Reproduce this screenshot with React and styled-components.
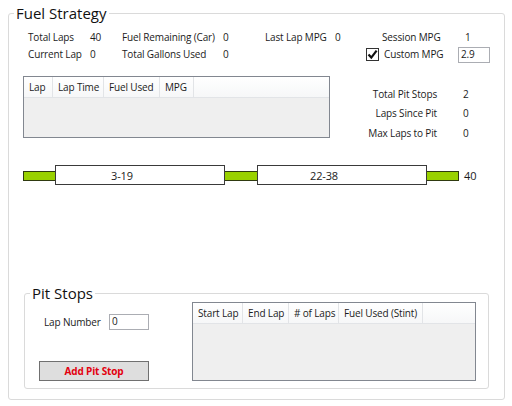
import React from "react";
import styled, { createGlobalStyle } from "styled-components";

const GlobalStyle = createGlobalStyle`
    html, body {
        margin: 0;
        padding: 0;
        background: #ffffff;
    }
    body {
        font-family: "Open Sans", "Noto Sans", sans-serif;
        font-size: 10px;
        letter-spacing: -0.15px;
        color: #1b1b1b;
    }
`;

const Group = styled.fieldset`
        box-sizing: border-box;
        width: ${p => p.$width}px;
        margin: ${p => p.$margin};
        padding: 0 0 ${p => p.$padBottom}px 0;
        border: 1px solid #dadada;
        border-radius: 3px;
        min-inline-size: 0;
    `,
    Legend = styled.legend`
        font-size: 15px;
        letter-spacing: 0;
        line-height: 18px;
        padding: 0 2px;
        margin-left: 5px;
        color: #111;
    `,
    StatsGrid = styled.div`
        display: grid;
        grid-template-columns: 62px 32px 101px 42px 70px 31px 16px 76px 40px;
        grid-auto-rows: 17px;
        align-items: center;
        margin: 7px 0 0 19px;
        line-height: 17px;
        white-space: nowrap;
    `,
    Cell = styled.div`
        grid-column: ${p => p.$col};
        grid-row: ${p => p.$row};
        padding-left: ${p => p.$pad || 0}px;
    `,
    Check = styled.div`
        box-sizing: border-box;
        width: 13px;
        height: 13px;
        border: 1px solid #333;
        background: #fff;
        display: flex;
        align-items: center;
        justify-content: center;
    `,
    TextBox = styled.div`
        box-sizing: border-box;
        width: ${p => p.$width}px;
        height: 16px;
        border: 1px solid #abadb3;
        background: #fff;
        padding: 0 2px;
        line-height: 13px;
    `,
    Middle = styled.div`
        display: flex;
        height: 66px;
        margin: 13px 0 0 14px;
    `,
    List = styled.div`
        box-sizing: border-box;
        width: ${p => p.$width}px;
        height: ${p => p.$height}px;
        border: 1px solid #828790;
        background: #efefef;
        display: flex;
        flex-direction: column;
    `,
    ListHeader = styled.div`
        display: flex;
        height: 20px;
        background: linear-gradient(#ffffff, #f6f7f8);
        border-bottom: 1px solid #e2e4e7;
    `,
    HeaderCell = styled.div`
        box-sizing: border-box;
        width: ${p => p.$width}px;
        padding-left: 5px;
        line-height: 20px;
        border-right: 1px solid #e2e4e7;
        white-space: nowrap;
        overflow: hidden;
    `,
    PitStats = styled.div`
        display: grid;
        grid-template-columns: 107px 40px;
        grid-auto-rows: 19.5px;
        align-items: center;
        margin-top: 8px;
        white-space: nowrap;
    `,
    StatLabel = styled.div`
        text-align: right;
    `,
    StatValue = styled.div`
        padding-left: 26px;
    `,
    BarRow = styled.div`
        display: flex;
        align-items: center;
        margin: 23px 0 0 14px;
        height: 20px;
    `,
    Track = styled.div`
        position: relative;
        width: ${p => p.$width}px;
        height: 20px;

        &::before {
            content: "";
            position: absolute;
            left: 0;
            right: 0;
            top: 6px;
            height: 10px;
            box-sizing: border-box;
            border: 1px solid #2f3a10;
            background: #99d100;
        }
    `,
    Stint = styled.div`
        position: absolute;
        top: 0;
        box-sizing: border-box;
        height: 20px;
        border: 1px solid #3a3a3a;
        background: #fff;
        padding-right: 36px;
        text-align: center;
        line-height: 20px;
        font-size: 11px;
    `,
    BarEnd = styled.div`
        margin-left: 5px;
        font-size: 11px;
    `,
    PitBody = styled.div`
        display: flex;
    `,
    PitForm = styled.div`
        width: 167px;
        display: flex;
        flex-direction: column;
    `,
    LapRow = styled.div`
        display: grid;
        grid-template-columns: 65px 40px;
        align-items: center;
        margin: 12px 0 0 19px;
        height: 16px;
        white-space: nowrap;
    `,
    AddButton = styled.div`
        box-sizing: border-box;
        width: 110px;
        height: 20px;
        margin: 31px 0 0 14px;
        background: #dedede;
        border: 1px solid #707070;
        color: #e3000f;
        font-weight: bold;
        text-align: center;
        line-height: 18px;
    `;

const lapColumns = [
    { title: "Lap", width: 29 },
    { title: "Lap Time", width: 51 },
    { title: "Fuel Used", width: 56 },
    { title: "MPG", width: 34 },
];

const pitColumns = [
    { title: "Start Lap", width: 50 },
    { title: "End Lap", width: 46 },
    { title: "# of Laps", width: 50 },
    { title: "Fuel Used (Stint)", width: 84 },
];

const stints = [
    { label: "3-19", left: 32, width: 170 },
    { label: "22-38", left: 234, width: 170 },
];

const ListView = ({ columns, width, height }) => (
    <List $width={width} $height={height}>
        <ListHeader>
            {columns.map(c => <HeaderCell key={c.title} $width={c.width}>{c.title}</HeaderCell>)}
        </ListHeader>
    </List>
);

const CheckMark = () => (
    <svg width="11" height="11" viewBox="0 0 11 11">
        <path d="M1.5 5.5 L4.3 8.6 L9.6 1.6" fill="none" stroke="#111" strokeWidth="2.2" />
    </svg>
);

const App = () => {
    return (
        <>
            <GlobalStyle />
            <Group $width={497} $margin="4px 0 0 8px" $padBottom={10}>
                <Legend>Fuel Strategy</Legend>
                <StatsGrid>
                    <Cell $col={1} $row={1}>Total Laps</Cell>
                    <Cell $col={2} $row={1}>40</Cell>
                    <Cell $col={3} $row={1}>Fuel Remaining (Car)</Cell>
                    <Cell $col={4} $row={1}>0</Cell>
                    <Cell $col={5} $row={1}>Last Lap MPG</Cell>
                    <Cell $col={6} $row={1}>0</Cell>
                    <Cell $col={8} $row={1}>Session MPG</Cell>
                    <Cell $col={9} $row={1} $pad={7}>1</Cell>

                    <Cell $col={1} $row={2}>Current Lap</Cell>
                    <Cell $col={2} $row={2}>0</Cell>
                    <Cell $col={3} $row={2}>Total Gallons Used</Cell>
                    <Cell $col={4} $row={2}>0</Cell>
                    <Cell $col={7} $row={2}><Check><CheckMark /></Check></Cell>
                    <Cell $col={8} $row={2} $pad={2}>Custom MPG</Cell>
                    <Cell $col={9} $row={2}><TextBox $width={32}>2.9</TextBox></Cell>
                </StatsGrid>

                <Middle>
                    <ListView columns={lapColumns} width={307} height={62} />
                    <PitStats>
                        <StatLabel>Total Pit Stops</StatLabel><StatValue>2</StatValue>
                        <StatLabel>Laps Since Pit</StatLabel><StatValue>0</StatValue>
                        <StatLabel>Max Laps to Pit</StatLabel><StatValue>0</StatValue>
                    </PitStats>
                </Middle>

                <BarRow>
                    <Track $width={436}>
                        {stints.map(s => (
                            <Stint key={s.label} style={{ left: s.left, width: s.width }}>{s.label}</Stint>
                        ))}
                    </Track>
                    <BarEnd>40</BarEnd>
                </BarRow>

                <Group $width={465} $margin="99px 0 0 15px" $padBottom={7}>
                    <Legend>Pit Stops</Legend>
                    <PitBody>
                        <PitForm>
                            <LapRow>
                                <span>Lap Number</span>
                                <TextBox $width={40}>0</TextBox>
                            </LapRow>
                            <AddButton>Add Pit Stop</AddButton>
                        </PitForm>
                        <ListView columns={pitColumns} width={284} height={79} />
                    </PitBody>
                </Group>
            </Group>
        </>
    );
};

export default App;
